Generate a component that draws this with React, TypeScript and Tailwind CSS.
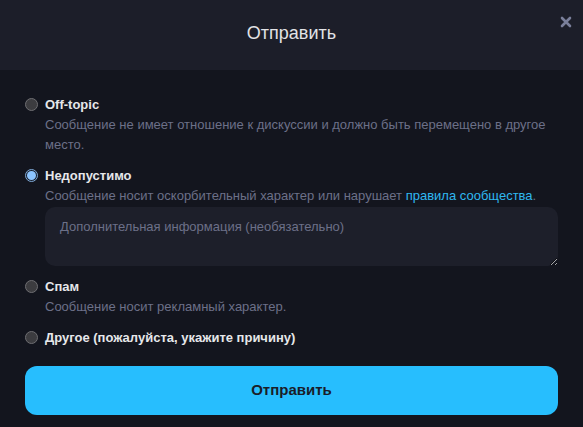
import React from 'react'

const Radio = ({ checked }: { checked?: boolean }) =>
  checked ? (
    <span className="mt-[3px] flex h-[13px] w-[13px] shrink-0 items-center justify-center rounded-full border border-[#7fa9d6] bg-[#1a2230]">
      <span className="h-[9px] w-[9px] rounded-full bg-[#8cc4ff]" />
    </span>
  ) : (
    <span className="mt-[3px] h-[13px] w-[13px] shrink-0 rounded-full border border-[#6e6e72] bg-[#3c3c40]" />
  )

const Option = ({
  title,
  checked,
  children,
}: {
  title: string
  checked?: boolean
  children?: React.ReactNode
}) => (
  <div className="flex gap-[7px]">
    <Radio checked={checked} />
    <div className="flex-1">
      <div className="text-[13px] font-bold leading-[20px] text-[#e6e7ea]">{title}</div>
      {children}
    </div>
  </div>
)

export default function App() {
  return (
    <div
      className="h-[427px] w-[583px] overflow-hidden bg-[#13151e]"
      style={{ fontFamily: '"Liberation Sans", Arial, sans-serif' }}
    >
      <div className="relative flex h-[70px] items-center justify-center bg-[#1c1e29] pb-[4px]">
        <h2 className="text-[18px] leading-none text-[#e2e3e6]">Отправить</h2>
        <button className="absolute right-[11px] top-[16px] text-[#7a7f9a]">
          <svg width="12" height="12" viewBox="0 0 12 12">
            <path d="M2 2 L10 10 M10 2 L2 10" stroke="currentColor" strokeWidth="2.6" strokeLinecap="round" />
          </svg>
        </button>
      </div>
      <div className="flex flex-col px-[25px] pt-[25px]">
        <div className="flex flex-col gap-[11px]">
          <Option title="Off-topic">
            <p className="text-[13px] leading-[20px] text-[#6c7088]">
              Сообщение не имеет отношение к дискуссии и должно быть перемещено в другое место.
            </p>
          </Option>
          <Option title="Недопустимо" checked>
            <p className="text-[13px] leading-[20px] text-[#6c7088]">
              Сообщение носит оскорбительный характер или нарушает{' '}
              <a className="text-[#2fb8f0]">правила сообщества</a>.
            </p>
            <textarea
              className="mt-[1px] block h-[59px] w-full rounded-[10px] bg-[#1d1f2a] px-[15px] py-[10px] text-[13px] text-[#c8c9d0] outline-none placeholder:text-[#6c7088]"
              placeholder="Дополнительная информация (необязательно)"
            />
          </Option>
          <Option title="Спам">
            <p className="text-[13px] leading-[20px] text-[#6c7088]">Сообщение носит рекламный характер.</p>
          </Option>
          <Option title="Другое (пожалуйста, укажите причину)" />
        </div>
        <button className="mt-[18px] h-[49px] w-[533px] rounded-[12px] bg-[#27befe] text-[15px] font-bold text-[#1a1d29]">
          Отправить
        </button>
      </div>
    </div>
  )
}
